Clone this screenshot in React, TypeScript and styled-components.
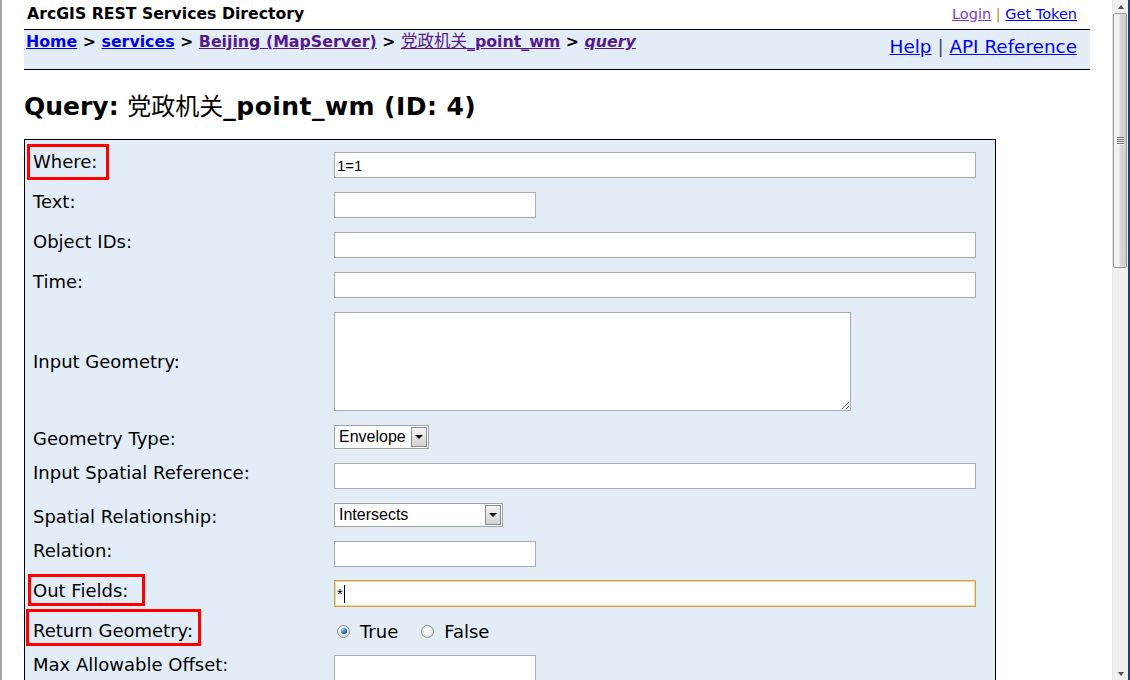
import React from 'react';
import styled, { createGlobalStyle } from 'styled-components';

const GlobalStyle = createGlobalStyle`
  html, body {
    margin: 0;
    padding: 0;
    background: #fff;
    overflow: hidden;
  }
  body {
    font-family: "DejaVu Sans", Verdana, sans-serif;
    color: #000;
  }
`;

type Box = [number, number, number, number];

type Control =
  | { kind: 'text'; wide?: boolean; value?: string }
  | { kind: 'focused'; value: string }
  | { kind: 'area' }
  | { kind: 'select'; width: number; value: string }
  | { kind: 'radio'; options: string[]; checked: number };

interface Field {
  label: string;
  control: Control;
  lift?: number;
  mark?: Box;
}

const fields: Field[] = [
  { label: 'Where:', control: { kind: 'text', wide: true, value: '1=1' }, lift: 3, mark: [7, 12, 8, 6] },
  { label: 'Text:', control: { kind: 'text' }, lift: 3 },
  { label: 'Object IDs:', control: { kind: 'text', wide: true }, lift: 3 },
  { label: 'Time:', control: { kind: 'text', wide: true }, lift: 3 },
  { label: 'Input Geometry:', control: { kind: 'area' } },
  { label: 'Geometry Type:', control: { kind: 'select', width: 95, value: 'Envelope' }, lift: -1.5 },
  { label: 'Input Spatial Reference:', control: { kind: 'text', wide: true }, lift: 3 },
  { label: 'Spatial Relationship:', control: { kind: 'select', width: 169, value: 'Intersects' }, lift: -1.5 },
  { label: 'Relation:', control: { kind: 'text' }, lift: 3 },
  { label: 'Out Fields:', control: { kind: 'focused', value: '*' }, lift: 3, mark: [6, 17, 5, 5] },
  { label: 'Return Geometry:', control: { kind: 'radio', options: ['True', 'False'], checked: 0 }, mark: [11, 8, 5, 7] },
  { label: 'Max Allowable Offset:', control: { kind: 'text' }, lift: 3 },
  { label: 'Geometry Precision:', control: { kind: 'text' }, lift: 3 },
  { label: 'Output Spatial Reference:', control: { kind: 'text' }, lift: 3 },
];

export default function App() {
  return (
    <>
      <GlobalStyle />
      <Window>
        <FrameEdge $color="#a3a3a3" $width={2} />
        <Page>
          <TopBar>
            <SiteTitle>ArcGIS REST Services Directory</SiteTitle>
            <UserLinks>
              <Link $tone="light">Login</Link>
              <Sep $color="#b88a3a"> | </Sep>
              <Link>Get Token</Link>
            </UserLinks>
          </TopBar>
          <NavBar>
            <Crumbs>
              <Link>Home</Link> &gt; <Link>services</Link> &gt;{' '}
              <Link $tone="visited">Beijing (MapServer)</Link> &gt;{' '}
              <Link $tone="visited">
                <Cjk>党政机关</Cjk>_point_wm
              </Link>{' '}
              &gt;{' '}
              <Link $tone="visited" $italic>
                query
              </Link>
            </Crumbs>
            <HelpLinks>
              <Link>Help</Link>
              <Sep $color="#3a4a6a"> | </Sep>
              <Link>API Reference</Link>
            </HelpLinks>
          </NavBar>

          <Heading>
            Query: <CjkPlain>党政机关</CjkPlain>
            <HeadingTail>_point_wm (ID: 4)</HeadingTail>
          </Heading>

          <QueryForm>
            {fields.map((f) => (
              <FieldRow key={f.label}>
                <FieldLabel $lift={f.lift ?? 0}>
                  {f.mark ? <Marked $box={f.mark}>{f.label}</Marked> : f.label}
                </FieldLabel>
                <div>{renderControl(f.control)}</div>
              </FieldRow>
            ))}
          </QueryForm>
        </Page>
        <Scrollbar>
          <ScrollArrow>
            <Triangle $dir="up" />
          </ScrollArrow>
          <Thumb>
            <Grip />
          </Thumb>
          <Track />
          <ScrollArrow>
            <Triangle $dir="down" />
          </ScrollArrow>
        </Scrollbar>
        <FrameEdge $color="#1f3f6c" $width={2} />
      </Window>
    </>
  );
}

function renderControl(c: Control) {
  switch (c.kind) {
    case 'text':
      return <TextInput $wide={c.wide} defaultValue={c.value ?? ''} readOnly />;
    case 'focused':
      return (
        <FocusedInput>
          {c.value}
          <Caret />
        </FocusedInput>
      );
    case 'area':
      return <TextArea readOnly />;
    case 'select':
      return (
        <Select style={{ width: c.width }}>
          <SelectValue>{c.value}</SelectValue>
          <SelectButton />
        </Select>
      );
    case 'radio':
      return (
        <RadioGroup>
          {c.options.map((o, i) => (
            <RadioOption key={o}>
              <RadioDot $checked={i === c.checked} />
              {o}
            </RadioOption>
          ))}
        </RadioGroup>
      );
  }
}

const Window = styled.div`
  display: flex;
  width: 1130px;
  height: 680px;
  overflow: hidden;
`;

const FrameEdge = styled.div<{ $color: string; $width: number }>`
  flex: 0 0 ${(p) => p.$width}px;
  background: ${(p) => p.$color};
`;

const Page = styled.div`
  flex: 1;
  min-width: 0;
  padding: 0 22px;
  overflow: hidden;
`;

const TopBar = styled.div`
  display: flex;
  justify-content: space-between;
  align-items: center;
  height: 29px;
  box-sizing: border-box;
  padding: 0 13px 2px 3px;
`;

const SiteTitle = styled.div`
  font-size: 15.7px;
  font-weight: bold;
`;

const UserLinks = styled.div`
  font-size: 14.5px;
  white-space: pre;
`;

const Link = styled.a<{ $tone?: 'visited' | 'light'; $italic?: boolean }>`
  color: ${(p) => (p.$tone === 'visited' ? '#551a8b' : p.$tone === 'light' ? '#7a3cc8' : '#0000ee')};
  text-decoration: underline;
  font-style: ${(p) => (p.$italic ? 'italic' : 'normal')};
  cursor: pointer;
`;

const Sep = styled.span<{ $color: string }>`
  color: ${(p) => p.$color};
  white-space: pre;
`;

const NavBar = styled.div`
  display: flex;
  justify-content: space-between;
  align-items: flex-start;
  height: 41px;
  box-sizing: border-box;
  border-top: 1px solid #000;
  border-bottom: 1px solid #000;
  background: #e3edf7;
  padding: 0 13px 0 2px;
`;

const Crumbs = styled.div`
  font-size: 15.8px;
  font-weight: bold;
  line-height: 19px;
  padding-top: 2px;
`;

const Cjk = styled.span`
  font-family: "Noto Sans CJK SC", sans-serif;
  font-weight: normal;
  font-size: 16.5px;
  line-height: 1;
`;

const HelpLinks = styled.div`
  font-size: 18.4px;
  line-height: 21px;
  padding-top: 6px;
  white-space: pre;
`;

const Heading = styled.h2`
  margin: 22px 0 18px;
  font-size: 25px;
  font-weight: bold;
  line-height: 29px;
  height: 29px;
`;

const CjkPlain = styled.span`
  font-family: "Noto Sans CJK SC", sans-serif;
  font-weight: normal;
  font-size: 24px;
  line-height: 1;
`;

const HeadingTail = styled.span`
  letter-spacing: 0.45px;
`;

const QueryForm = styled.div`
  width: 972px;
  box-sizing: border-box;
  border: 1px solid #000;
  background: #e3edf7;
  padding: 5px 0 20px;
`;

const FieldRow = styled.div`
  display: grid;
  grid-template-columns: 309px 1fr;
  align-items: center;
  padding: 7px 0;
`;

const FieldLabel = styled.div<{ $lift: number }>`
  font-size: 18px;
  line-height: 20px;
  padding-left: 8px;
  padding-bottom: ${(p) => (p.$lift > 0 ? p.$lift * 2 : 0)}px;
  padding-top: ${(p) => (p.$lift < 0 ? -p.$lift * 2 : 0)}px;
`;

// red annotation frame drawn over a label: [top, right, bottom, left] overhang
const Marked = styled.span<{ $box: Box }>`
  position: relative;
  &::after {
    content: '';
    position: absolute;
    top: -${(p) => p.$box[0]}px;
    right: -${(p) => p.$box[1]}px;
    bottom: -${(p) => p.$box[2]}px;
    left: -${(p) => p.$box[3]}px;
    border: 3px solid #f00;
  }
`;

const TextInput = styled.input<{ $wide?: boolean }>`
  display: block;
  box-sizing: border-box;
  width: ${(p) => (p.$wide ? 642 : 202)}px;
  height: 26px;
  margin: 0;
  padding: 0 2px;
  border: 1px solid #a9abae;
  background: #fff;
  font: 15px "Liberation Sans", Arial, sans-serif;
  color: #000;
  outline: none;
`;

// focused field keeps the row height of a normal input; its glow sits one pixel higher
const FocusedInput = styled.div`
  display: flex;
  align-items: center;
  box-sizing: border-box;
  width: 642px;
  height: 27px;
  margin: -1px 0 0;
  padding-left: 2px;
  border: 1px solid #d2a24a;
  box-shadow: inset 0 0 0 1px #f1d9a6;
  background: #fff;
  font: 15px "Liberation Sans", Arial, sans-serif;
`;

const Caret = styled.span`
  width: 1px;
  height: 18px;
  margin-left: 1px;
  background: #000;
`;

const TextArea = styled.textarea`
  display: block;
  box-sizing: border-box;
  width: 517px;
  height: 99px;
  margin: 0;
  border: 1px solid #a9abae;
  background: #fff;
  outline: none;
`;

const Select = styled.div`
  display: flex;
  box-sizing: border-box;
  height: 24px;
  border: 1px solid #a3a3a3;
  background: #fff;
  font: 16px "Liberation Sans", Arial, sans-serif;
`;

const SelectValue = styled.span`
  flex: 1;
  padding-left: 4px;
  line-height: 22px;
  white-space: nowrap;
`;

const SelectButton = styled.span`
  flex: 0 0 14px;
  margin: 1px;
  border: 1px solid #8a8a8a;
  background: linear-gradient(#f4f4f4, #d3d3d3);
  display: flex;
  align-items: center;
  justify-content: center;
  &::before {
    content: '';
    border-top: 4px solid #000;
    border-left: 4px solid transparent;
    border-right: 4px solid transparent;
  }
`;

const RadioGroup = styled.div`
  display: flex;
  align-items: center;
  height: 20px;
  padding-left: 3px;
  font-size: 18px;
`;

const RadioOption = styled.label`
  display: flex;
  align-items: center;
  gap: 10px;
  margin-right: 23px;
`;

const RadioDot = styled.span<{ $checked?: boolean }>`
  width: 13px;
  height: 13px;
  box-sizing: border-box;
  border-radius: 50%;
  border: 1px solid #8c8e90;
  background: radial-gradient(circle at 40% 35%, #ffffff, #d8d8d8);
  display: flex;
  align-items: center;
  justify-content: center;
  &::after {
    content: '';
    display: ${(p) => (p.$checked ? 'block' : 'none')};
    width: 6px;
    height: 6px;
    border-radius: 50%;
    background: radial-gradient(circle at 35% 30%, #8fd0ff, #1a63a8 60%, #0d3c70);
  }
`;

const Scrollbar = styled.div`
  flex: 0 0 16px;
  box-sizing: border-box;
  display: flex;
  flex-direction: column;
  background: #f0f0f0;
  border-left: 1px solid #e4e4e4;
`;

const ScrollArrow = styled.div`
  height: 13px;
  display: flex;
  align-items: center;
  justify-content: center;
`;

const Triangle = styled.span<{ $dir: 'up' | 'down' }>`
  border-left: 3.5px solid transparent;
  border-right: 3.5px solid transparent;
  ${(p) => (p.$dir === 'up' ? 'border-bottom: 4px solid #505050;' : 'border-top: 4px solid #505050;')}
`;

const Thumb = styled.div`
  height: 255px;
  margin: 0 1px 0 0;
  box-sizing: border-box;
  border: 1px solid #979797;
  border-radius: 2px;
  background: linear-gradient(to right, #f6f6f6, #ececec 45%, #d9d9d9 55%, #cfcfcf);
  display: flex;
  align-items: center;
  justify-content: center;
`;

const Grip = styled.span`
  width: 7px;
  height: 8px;
  background: repeating-linear-gradient(#6e6e6e 0 1px, #f2f2f2 1px 2px);
`;

const Track = styled.div`
  flex: 1;
`;
